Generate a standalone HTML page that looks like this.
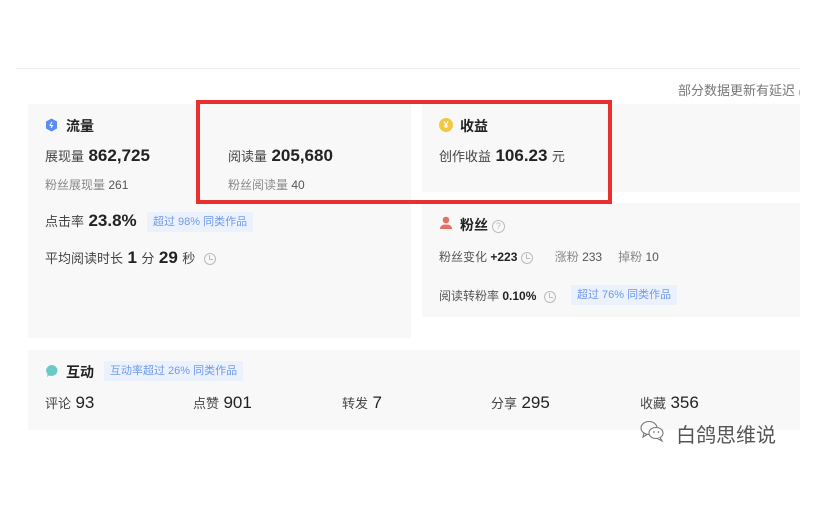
<!DOCTYPE html>
<html><head><meta charset="utf-8">
<style>
*{margin:0;padding:0;box-sizing:border-box}
body{width:830px;height:525px;background:#fff;position:relative;overflow:hidden;font-family:"Liberation Sans","Noto Sans CJK SC",sans-serif;color:#222}
.a{position:absolute;white-space:nowrap}
.card{position:absolute;background:#f8f8f9}
.t{font-size:14px;font-weight:bold;color:#222}
.l{font-size:13px;color:#444}
.n{font-size:17px;font-weight:bold;color:#222}
.s{font-size:12px;color:#888}
.sn{font-size:12px;color:#555}
.badge{position:absolute;background:#ebf2fe;color:#6f98ee;font-size:11px;line-height:20px;padding:0 6px;white-space:nowrap}
.clk{display:inline-block;width:12px;height:12px;border:1.3px solid #bbb;border-radius:50%;position:relative;vertical-align:middle}
.clk:after{content:"";position:absolute;left:4px;top:1.5px;width:3px;height:3.5px;border-left:1.3px solid #bbb;border-bottom:1.3px solid #bbb}
</style></head><body>
<div class="a" style="left:16px;top:68px;width:784px;height:1px;background:#ececec"></div>
<div class="a" style="left:600px;top:78px;width:200px;height:22px;overflow:hidden">
<div class="a" style="left:78px;top:2px;font-size:13px;color:#777">部分数据更新有延迟 <span style="display:inline-block;width:13px;height:13px;border:1px solid #aaa;border-radius:50%;font-size:9px;line-height:11px;text-align:center;color:#aaa">?</span></div>
</div>

<div class="card" style="left:28px;top:104px;width:383px;height:234px"></div>
<div class="card" style="left:422px;top:104px;width:378px;height:88px"></div>
<div class="card" style="left:422px;top:203px;width:378px;height:114px"></div>
<div class="card" style="left:28px;top:350px;width:772px;height:80px"></div>

<!-- 流量 -->
<svg class="a" style="left:45px;top:118px" width="13" height="14" viewBox="0 0 13 14"><path d="M6.5 0.5 L12 3.5 V10.5 L6.5 13.5 L1 10.5 V3.5Z" fill="#5b8cf0"/><path d="M7 4 L5 7.5 H7.5 L6 10" stroke="#fff" stroke-width="1" fill="none"/></svg>
<div class="a t" style="left:66px;top:116px">流量</div>
<div class="a" style="left:45px;top:146px"><span class="l">展现量</span> <span class="n">862,725</span></div>
<div class="a s" style="left:45px;top:176px">粉丝展现量 <span class="sn">261</span></div>
<div class="a" style="left:228px;top:146px"><span class="l">阅读量</span> <span class="n">205,680</span></div>
<div class="a s" style="left:228px;top:176px">粉丝阅读量 <span class="sn">40</span></div>
<div class="a" style="left:45px;top:211px"><span class="l">点击率</span> <span class="n">23.8%</span></div>
<div class="badge" style="left:147px;top:212px">超过 98% 同类作品</div>
<div class="a" style="left:45px;top:248px"><span class="l">平均阅读时长</span> <span class="n">1</span> <span class="l">分</span> <span class="n">29</span> <span class="l">秒</span> <span class="clk" style="margin-left:4px"></span></div>

<!-- 收益 -->
<div class="a" style="left:439px;top:118px;width:14px;height:14px;border-radius:50%;background:#f2c744;color:#fff;font-size:9px;line-height:14px;text-align:center;font-weight:bold">¥</div>
<div class="a t" style="left:460px;top:116px">收益</div>
<div class="a" style="left:439px;top:146px"><span class="l">创作收益</span> <span class="n">106.23</span> <span class="l">元</span></div>

<!-- 粉丝 -->
<svg class="a" style="left:439px;top:216px" width="14" height="14" viewBox="0 0 14 14"><circle cx="7" cy="4" r="3.3" fill="#e56f62"/><path d="M1 13 Q1 8.5 7 8.5 Q13 8.5 13 13Z" fill="#e56f62"/></svg>
<div class="a t" style="left:460px;top:215px">粉丝 <span style="display:inline-block;width:13px;height:13px;border:1px solid #bbb;border-radius:50%;font-size:9px;line-height:11px;text-align:center;color:#bbb;font-weight:normal;vertical-align:1px">?</span></div>
<div class="a" style="left:439px;top:248px;font-size:12px;color:#555">粉丝变化 <b style="color:#222;font-size:12px">+223</b> <span class="clk"></span><span style="margin-left:22px;color:#888">涨粉</span> <span>233</span><span style="margin-left:16px;color:#888">掉粉</span> <span>10</span></div>
<div class="a" style="left:439px;top:287px;font-size:12px;color:#555">阅读转粉率 <b style="color:#222">0.10%</b> <span class="clk" style="margin-left:4px"></span></div>
<div class="badge" style="left:571px;top:285px">超过 76% 同类作品</div>

<!-- 互动 -->
<svg class="a" style="left:45px;top:364px" width="14" height="14" viewBox="0 0 14 14"><path d="M7 1 A6 5.5 0 1 1 4 11.5 L2 13 L2.5 10 A6 5.5 0 0 1 7 1Z" fill="#6cc9c8"/></svg>
<div class="a t" style="left:66px;top:362px">互动</div>
<div class="badge" style="left:104px;top:361px">互动率超过 26% 同类作品</div>
<div class="a" style="left:45px;top:393px"><span class="l">评论</span> <span class="n" style="font-weight:normal">93</span></div>
<div class="a" style="left:193px;top:393px"><span class="l">点赞</span> <span class="n" style="font-weight:normal">901</span></div>
<div class="a" style="left:342px;top:393px"><span class="l">转发</span> <span class="n" style="font-weight:normal">7</span></div>
<div class="a" style="left:491px;top:393px"><span class="l">分享</span> <span class="n" style="font-weight:normal">295</span></div>
<div class="a" style="left:640px;top:393px"><span class="l">收藏</span> <span class="n" style="font-weight:normal">356</span></div>

<!-- watermark -->
<svg class="a" style="left:640px;top:419px" width="26" height="24" viewBox="0 0 26 24"><ellipse cx="9" cy="9" rx="8" ry="6.5" fill="none" stroke="#777" stroke-width="1.1"/><path d="M4 14 L3 18 L7 15.5" fill="none" stroke="#777" stroke-width="1.1"/><ellipse cx="16" cy="14" rx="7" ry="5.5" fill="#fff" stroke="#777" stroke-width="1.1"/><path d="M20 18.5 L22 22 L17.5 19.5" fill="#fff" stroke="#777" stroke-width="1.1"/><circle cx="14" cy="13" r="0.9" fill="#777"/><circle cx="18.5" cy="13" r="0.9" fill="#777"/></svg>
<div class="a" style="left:676px;top:419px;font-size:20px;color:#555">白鸽思维说</div>

<!-- red box -->
<div class="a" style="left:196px;top:100px;width:416px;height:104px;border:4px solid #e8312e"></div>
</body></html>
